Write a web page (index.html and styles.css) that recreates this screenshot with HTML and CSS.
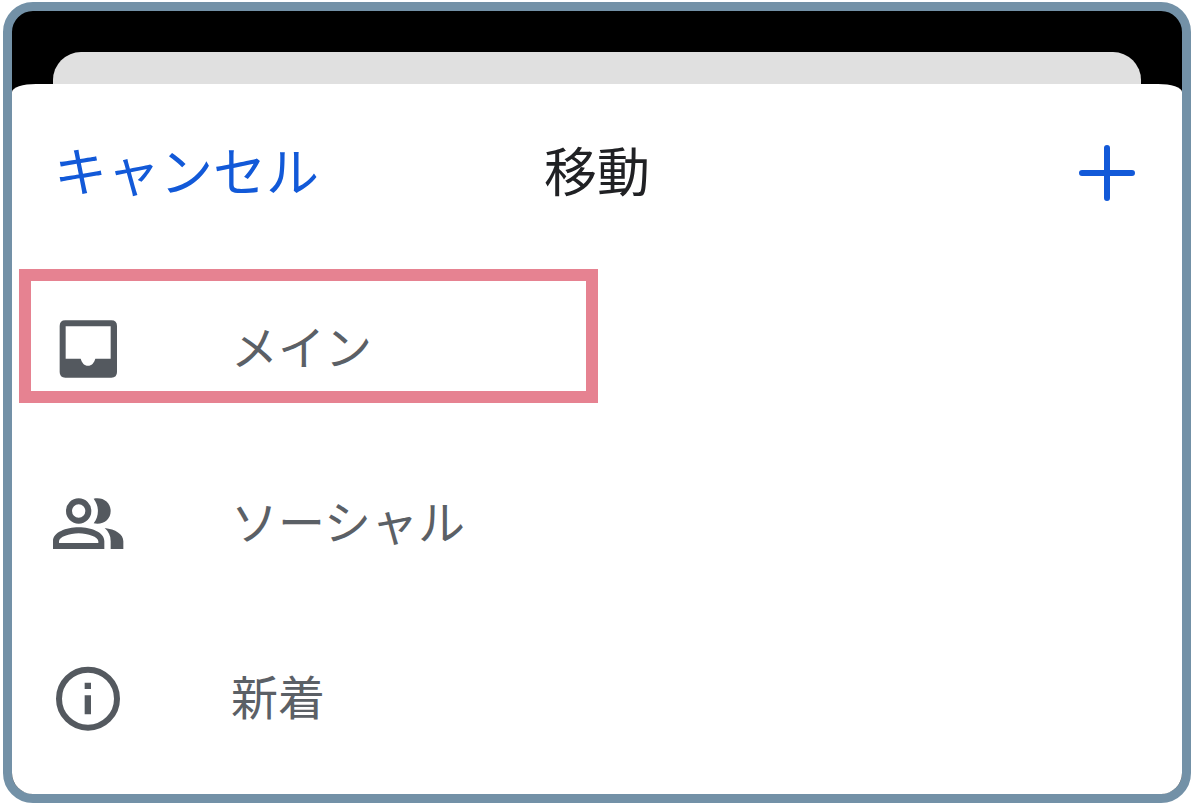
FILE: index.html
```html
<!DOCTYPE html>
<html lang="ja">
<head>
    <meta charset="UTF-8">
    <meta name="viewport" content="width=device-width, initial-scale=1.0">
    <title>移動</title>
    <link rel="stylesheet" href="styles.css">
</head>
<body>
    <div class="screen">
        <div class="back-card"></div>
        <main class="sheet">
            <header class="sheet-header">
                <button type="button" class="cancel">キャンセル</button>
                <h1>移動</h1>
                <button type="button" class="add" aria-label="追加">
                    <svg viewBox="-5 -5 66 66" width="66" height="66">
                        <path d="M28 3V53M3 28H53" fill="none" stroke="currentColor" stroke-width="6" stroke-linecap="round"/>
                    </svg>
                </button>
            </header>
            <ul class="folders">
                <li>
                    <button type="button" class="folder selected">
                        <svg class="icon" viewBox="150 183 228 228">
                            <path fill="currentColor" fill-rule="evenodd" d="M196 211H334Q351 211 351 228V366Q351 383 334 383H196Q179 383 179 366V228Q179 211 196 211ZM197 229V326H242C246 339 253 347 264 347S282 339 286 326H332V229Z"/>
                        </svg>
                        <span class="name">メイン</span>
                    </button>
                </li>
                <li>
                    <button type="button" class="folder">
                        <svg class="icon" viewBox="60 18 228 228">
                            <circle cx="146" cy="93" r="29" fill="none" stroke="currentColor" stroke-width="18"/>
                            <path fill="currentColor" fill-rule="evenodd" d="M69 207V184C69 157 108 142 146 142S223 157 223 184V207ZM87 189H205V184C205 171 174 160 146 160S87 171 87 184Z"/>
                            <path fill="currentColor" d="M191 56C219 50 242 67 242 93S219 136 191 130C208 108 208 78 191 56ZM224 144C256 148 280 162 280 184V207H242V184C242 167 236 155 224 144Z"/>
                        </svg>
                        <span class="name">ソーシャル</span>
                    </button>
                </li>
                <li>
                    <button type="button" class="folder">
                        <svg class="icon" viewBox="60 33 228 228">
                            <circle cx="174" cy="146" r="87" fill="none" stroke="currentColor" stroke-width="18"/>
                            <path fill="currentColor" d="M164 98H183V117H164ZM164 136H183V193H164Z"/>
                        </svg>
                        <span class="name">新着</span>
                    </button>
                </li>
            </ul>
        </main>
    </div>
</body>
</html>
```

FILE: styles.css
```css
*,
*::after {
    box-sizing: border-box;
}
body {
    margin: 0;
    padding: 2px 3px 3px;
    min-height: 100vh;
    display: flex;
    background-color: #fff;
    font-family: "Noto Sans CJK JP", sans-serif;
}
button {
    padding: 0;
    border: none;
    background: none;
    font-family: inherit;
    cursor: pointer;
}
svg {
    display: block;
}
.screen {
    flex: 1;
    display: flex;
    flex-direction: column;
    padding-top: 41px;
    border: 9px solid #7391a7;
    border-radius: 30px;
    background-color: #000;
    overflow: hidden;
}
.back-card {
    height: 32px;
    margin: 0 41px;
    border-radius: 28px 28px 0 0;
    background-color: #e0e0e0;
}
.sheet {
    flex: 1;
    border-radius: 24px 24px 0 0 / 8px 8px 0 0;
    background-color: #fff;
}
.sheet-header {
    display: grid;
    grid-template-columns: 1fr auto 1fr;
    align-items: center;
    height: 177px;
    padding: 0 42px;
}
.cancel,
h1 {
    margin: 0;
    padding-bottom: 8px;
    font-size: 53px;
    font-weight: 400;
    line-height: 64px;
}
.cancel {
    justify-self: start;
    color: #1259d8;
}
h1 {
    color: #202124;
}
.add {
    justify-self: end;
    color: #1259d8;
}
.folders {
    margin: 0;
    padding: 0;
    list-style: none;
}
.folder {
    position: relative;
    display: flex;
    align-items: center;
    gap: 105px;
    width: 100%;
    height: 175px;
    padding-left: 38px;
    color: #5b6066;
    font-size: 47px;
    line-height: 56px;
    text-align: left;
}
.icon {
    width: 76px;
    height: 76px;
    color: #54595f;
}
.name {
    padding-bottom: 8px;
}
/* frame around the chosen folder */
.selected::after {
    content: "";
    position: absolute;
    top: 8px;
    left: 7px;
    width: 579px;
    height: 134px;
    border: 12px solid #e68291;
}
```
